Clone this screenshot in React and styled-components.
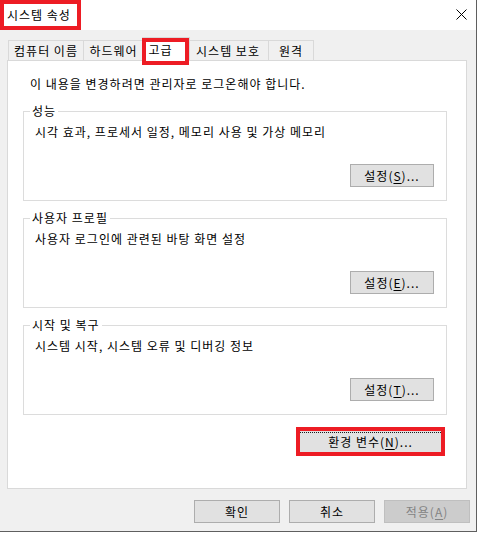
import styled, { createGlobalStyle } from "styled-components";

const GlobalStyle = createGlobalStyle`
  html, body {
    margin: 0;
    padding: 0;
    background: #ffffff;
  }
  body {
    font-family: "Noto Sans CJK KR", "Noto Sans", sans-serif;
    font-size: 12px;
    letter-spacing: 1px;
    color: #000;
  }
  * {
    box-sizing: border-box;
  }
`;

const Window = styled.div`
  width: 477px;
  height: 532px;
  display: flex;
  flex-direction: column;
  background: #f0f0f0;
  border-right: 1px solid #5f5f5f;
  border-bottom: 1px solid #5f5f5f;
`;

const TitleBar = styled.div`
  height: 30px;
  flex: 0 0 30px;
  background: #ffffff;
  display: flex;
  align-items: stretch;
  justify-content: space-between;
  padding-right: 9px;
`;

/* red annotation box drawn around the caption */
const TitleBox = styled.div`
  width: 81px;
  height: 30px;
  border: 4px solid #ed1c24;
  padding-left: 3px;
  display: flex;
  align-items: center;
  line-height: 16px;
  white-space: nowrap;
`;

const CloseButton = styled.div`
  display: flex;
  align-items: center;
  padding-bottom: 1px;
`;

const Body = styled.div`
  flex: 1;
  padding: 7px 9px 0 7px;
  display: flex;
  flex-direction: column;
`;

const TabStrip = styled.div`
  display: flex;
  align-items: flex-end;
  height: 24px;
  margin: 0 0 -1px 1px;
  position: relative;
  z-index: 1;
`;

const Tab = styled.div`
  position: relative;
  flex: 0 0 ${(p) => p.$width}px;
  height: ${(p) => (p.$active ? "24px" : "20px")};
  margin: ${(p) => (p.$active ? "0 -2px" : "0 0 1px")};
  padding: ${(p) => (p.$active ? "0 10px 0 0" : "0")};
  background: ${(p) => (p.$active ? "#ffffff" : "#f0f0f0")};
  border: 1px solid #d9d9d9;
  border-bottom: none;
  z-index: ${(p) => (p.$active ? 2 : 0)};
  display: flex;
  align-items: center;
  justify-content: center;
  line-height: 16px;
  white-space: nowrap;

  & + & {
    border-left: ${(p) => (p.$active ? "1px solid #d9d9d9" : "none")};
  }
`;

/* red annotation box around the selected tab */
const TabMark = styled.span`
  position: absolute;
  inset: 0 0 -4px 0;
  border: 4px solid #ed1c24;
  pointer-events: none;
`;

const Panel = styled.div`
  height: 429px;
  background: #ffffff;
  border: 1px solid #d9d9d9;
  padding: 15px 19px 0 15px;
  display: flex;
  flex-direction: column;
`;

const Notice = styled.div`
  line-height: 16px;
  margin: 0 0 11px 7px;
  white-space: nowrap;
`;

const Group = styled.fieldset`
  margin: 0 0 9px;
  border: 1px solid #dcdcdc;
  padding: 0 12px 13px 0;
  min-width: 0;
`;

const Legend = styled.legend`
  padding: 0 2px;
  margin-left: 6px;
  line-height: 16px;
  font-size: 12px;
`;

const GroupText = styled.div`
  line-height: 16px;
  margin: 5px 0 0 11px;
  white-space: nowrap;
`;

const ButtonRow = styled.div`
  display: flex;
  justify-content: flex-end;
  margin-top: ${(p) => p.$top || 0}px;
  margin-right: ${(p) => p.$right || 0}px;
`;

const Button = styled.button`
  width: ${(p) => p.$width || 84}px;
  height: 23px;
  padding: 0;
  font-family: inherit;
  font-size: 12px;
  letter-spacing: inherit;
  line-height: 21px;
  color: ${(p) => (p.disabled ? "#838383" : "#000")};
  background: ${(p) => (p.disabled ? "#cccccc" : "#e1e1e1")};
  border: 1px solid ${(p) => (p.disabled ? "#bfbfbf" : "#adadad")};
  border-radius: 0;

  u {
    text-decoration-thickness: 1px;
    text-underline-offset: 2px;
  }
`;

/* focused button with red annotation frame */
const EnvButton = styled.button`
  width: 149px;
  height: 29px;
  padding: 1px 0 0;
  font-family: inherit;
  font-size: 12px;
  letter-spacing: inherit;
  color: #000;
  background: #e1e1e1;
  border: 4px solid #ed1c24;
  border-radius: 0;

  u {
    text-decoration-thickness: 1px;
    text-underline-offset: 2px;
  }
`;

const FocusFrame = styled.span`
  display: flex;
  align-items: center;
  justify-content: center;
  height: 100%;
  border-top: 1px dotted #1a1a1a;
  line-height: 16px;
  padding-bottom: 1px;
`;

const Footer = styled.div`
  display: flex;
  justify-content: flex-end;
  gap: 9px;
  margin: 11px -3px 0 0;
`;

const groups = [
  { title: "성능", text: "시각 효과, 프로세서 일정, 메모리 사용 및 가상 메모리", key: "S" },
  { title: "사용자 프로필", text: "사용자 로그인에 관련된 바탕 화면 설정", key: "E" },
  { title: "시작 및 복구", text: "시스템 시작, 시스템 오류 및 디버깅 정보", key: "T" },
];

const tabs = [
  { label: "컴퓨터 이름", width: 76 },
  { label: "하드웨어", width: 60 },
  { label: "고급", width: 48, active: true },
  { label: "시스템 보호", width: 81 },
  { label: "원격", width: 45 },
];

export default function App() {
  return (
    <>
      <GlobalStyle />
      <Window>
        <TitleBar>
          <TitleBox>시스템 속성</TitleBox>
          <CloseButton>
            <svg width="11" height="11" viewBox="0 0 11 11">
              <path d="M0.5 0.5 L10.5 10.5 M10.5 0.5 L0.5 10.5" stroke="#000" strokeWidth="1" fill="none" />
            </svg>
          </CloseButton>
        </TitleBar>
        <Body>
          <TabStrip>
            {tabs.map((t) => (
              <Tab key={t.label} $active={t.active} $width={t.width}>
                {t.label}
                {t.active && <TabMark />}
              </Tab>
            ))}
          </TabStrip>
          <Panel>
            <Notice>이 내용을 변경하려면 관리자로 로그온해야 합니다.</Notice>
            {groups.map((g) => (
              <Group key={g.title}>
                <Legend>{g.title}</Legend>
                <GroupText>{g.text}</GroupText>
                <ButtonRow $top={24}>
                  <Button>
                    설정(<u>{g.key}</u>)...
                  </Button>
                </ButtonRow>
              </Group>
            ))}
            <ButtonRow $top={3} $right={2}>
              <EnvButton>
                <FocusFrame>
                  환경 변수(<u>N</u>)...
                </FocusFrame>
              </EnvButton>
            </ButtonRow>
          </Panel>
          <Footer>
            <Button $width={86}>확인</Button>
            <Button $width={86}>취소</Button>
            <Button $width={86} disabled>
              적용(<u>A</u>)
            </Button>
          </Footer>
        </Body>
      </Window>
    </>
  );
}
